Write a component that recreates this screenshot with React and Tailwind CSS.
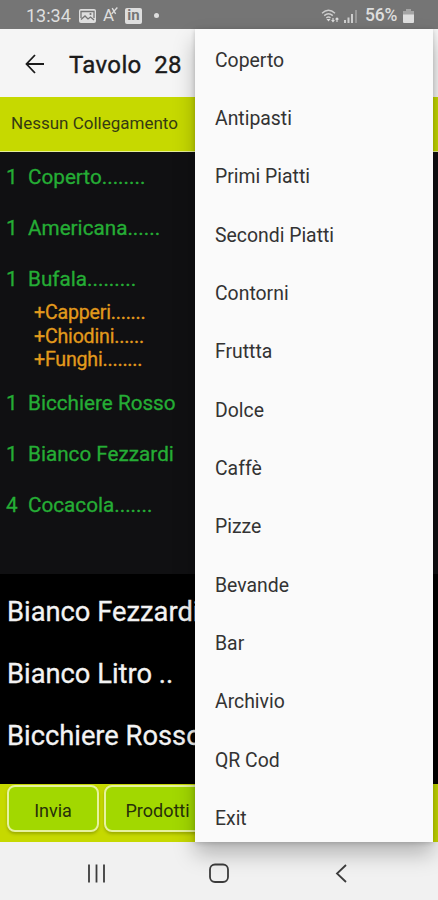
const menuItems = [
  "Coperto",
  "Antipasti",
  "Primi Piatti",
  "Secondi Piatti",
  "Contorni",
  "Fruttta",
  "Dolce",
  "Caffè",
  "Pizze",
  "Bevande",
  "Bar",
  "Archivio",
  "QR Cod",
  "Exit",
];

const orders = [
  { qty: 1, name: "Coperto........" },
  { qty: 1, name: "Americana......" },
  {
    qty: 1,
    name: "Bufala.........",
    extras: ["+Capperi.......", "+Chiodini......", "+Funghi........"],
  },
  { qty: 1, name: "Bicchiere Rosso" },
  { qty: 1, name: "Bianco Fezzardi" },
  { qty: 4, name: "Cocacola......." },
];

const products = ["Bianco Fezzardi", "Bianco Litro ..", "Bicchiere Rosso"];

const StatusBar = () => (
  <div className="flex h-[29px] shrink-0 items-center bg-[#757575] pl-[26px] pr-6 pt-[2px] text-[#dedede]">
    <span className="w-[53px] text-[18px] leading-none">13:34</span>
    <svg width="17" height="14" viewBox="0 0 17 14" className="shrink-0">
      <rect width="17" height="14" rx="2" fill="currentColor" />
      <path d="M2 9V2.500h13V9M2 10.500L6 7l3 3 2.500-2 3.500 3" fill="none" stroke="#757575" strokeWidth="1.300" />
      <circle cx="11.500" cy="5" r="1.100" fill="#757575" />
    </svg>
    <span className="ml-[7px] flex w-[22px] items-start leading-none">
      <span className="text-[17px]">A</span>
      <svg width="7" height="8" viewBox="0 0 6 7" className="-ml-[3px]">
        <path d="M1 1l3 5M5.500 .5L.5 6" stroke="currentColor" strokeWidth="1.200" fill="none" />
      </svg>
    </span>
    <span className="flex h-4 w-[17px] items-center justify-center rounded-[2px] bg-[#dedede] text-[15px] font-bold leading-none text-[#757575]">
      in
    </span>
    <span className="ml-[12px] size-[5px] rounded-full bg-[#dedede]" />

    <svg width="19" height="14" viewBox="0 0 19 14" className="ml-auto shrink-0" fill="none" stroke="currentColor">
      <path d="M1 4.200Q7.500-1.500 14 4.200M3.200 6.600Q7.500 3 11.800 6.600M5.300 9Q7.500 7.200 9.500 9" strokeWidth="1.400" opacity=".85" />
      <path d="M5.500 10h4L7.500 12.500Z" fill="currentColor" stroke="none" />
      <path d="M12 9v3.500M10.600 11L12 12.600 13.400 11M16 13V9M14.600 10.500L16 9 17.400 10.500" strokeWidth="1.100" />
    </svg>
    <svg width="14" height="14" viewBox="0 0 14 14" className="ml-1 shrink-0" fill="currentColor">
      <path d="M0 11h2v3H0zM3.500 8.500h2V14h-2zM7 5h2v9H7z" opacity=".85" />
      <path d="M11 1h2v13h-2z" opacity=".35" />
    </svg>
    <span className="ml-[7px] w-[35px] whitespace-nowrap text-[17.500px] font-medium leading-none tracking-[-0.2px]">
      56%
    </span>
    <svg width="11" height="14" viewBox="0 0 11 14" className="ml-[3px] shrink-0" fill="currentColor">
      <path d="M3 0h5v2h3v4H0V2h3Z" opacity=".45" />
      <path d="M0 5.500h11V13a1 1 0 0 1-1 1H1a1 1 0 0 1-1-1Z" />
    </svg>
  </div>
);

const OrderRow = ({ order }) => (
  <div>
    <div className="flex h-[50.800px] items-center whitespace-nowrap pl-[6px] pt-px text-[20.700px] text-[#25ad35] [-webkit-text-stroke:0.3px]">
      <span className="w-[22px]">{order.qty}</span>
      <span>{order.name}</span>
    </div>
    {order.extras && (
      <div className="-mt-[3px] h-[76.500px] pl-[34px] text-[19.600px] leading-[23.500px] tracking-[-0.2px] text-[#e29a1c] [-webkit-text-stroke:0.3px]">
        {order.extras.map((extra) => (
          <div key={extra}>{extra}</div>
        ))}
      </div>
    )}
  </div>
);

const SideMenu = () => (
  <div className="absolute left-[195px] top-[29px] h-[813px] w-[238px] overflow-hidden bg-[#fafafa] pt-[2px] shadow-[0_12px_20px_rgba(0,0,0,0.25),0_1px_5px_rgba(0,0,0,0.18)]">
    {menuItems.map((item) => (
      <div
        key={item}
        className="flex h-[58.350px] items-center pl-5 text-[19.400px] text-[#333]"
      >
        {item}
      </div>
    ))}
  </div>
);

const NavBar = () => (
  <div className="flex h-[58px] shrink-0 items-center bg-[#f1f1f1] pt-[5px] text-[#3c3c3c]">
    <svg width="438" height="24" viewBox="0 0 438 24" fill="none" stroke="currentColor" strokeWidth="1.800">
      <path d="M89 2.500v18M96.500 2.500v18M104 2.500v18" />
      <rect x="210" y="2.500" width="18" height="17.500" rx="5" />
      <path d="M346 3L337 11.500 346 20" />
    </svg>
  </div>
);

const App = () => {
  return (
    <div className="relative flex h-[900px] w-[438px] flex-col overflow-hidden bg-black font-['Roboto',sans-serif]">
      <StatusBar />
      <div className="flex h-[68px] shrink-0 items-center bg-[#f5f5f5] pl-[25px] pt-1 text-[#1b1b1b]">
        <svg width="20" height="20" viewBox="0 0 20 20" fill="none" stroke="currentColor" strokeWidth="1.800" className="-mt-[3px]">
          <path d="M19 10H2M10 1L1.500 10 10 19" />
        </svg>
        <h1 className="ml-6 whitespace-pre text-[24px] tracking-[0.35px] [-webkit-text-stroke:0.4px]">Tavolo  28</h1>
      </div>
      <div className="flex h-[55px] shrink-0 items-center border-b border-[#e4ed9a] bg-[#c6d900] pl-[11px] text-[17px] text-[#353b12]">
        Nessun Collegamento
      </div>
      <div className="h-[422px] shrink-0 bg-[#101012]">
        {orders.map((order) => (
          <OrderRow key={order.name} order={order} />
        ))}
      </div>
      <div className="flex h-[210px] shrink-0 flex-col pt-[7px] text-[27.300px] text-[#f3f3f3] [-webkit-text-stroke:0.3px]">
        {products.map((product) => (
          <div key={product} className="flex h-[62px] items-center whitespace-nowrap pl-[7px]">
            {product}
          </div>
        ))}
      </div>
      <div className="flex h-[58px] shrink-0 items-start gap-[5px] bg-[#c6d900] pl-[7px] pt-px text-[18px] text-[#27300a]">
        <button className="h-[47px] w-[92px] shrink-0 rounded-[8px] border-2 border-[#e6f2a0] bg-[#a2d800] pt-[3px] shadow-[0_2px_3px_rgba(80,90,0,0.35)]">
          Invia
        </button>
        <button className="h-[47px] w-[107px] shrink-0 rounded-[8px] border-2 border-[#e6f2a0] bg-[#a2d800] pt-[3px] shadow-[0_2px_3px_rgba(80,90,0,0.35)]">
          Prodotti
        </button>
      </div>
      <NavBar />
      <SideMenu />
    </div>
  );
};

export default App;
